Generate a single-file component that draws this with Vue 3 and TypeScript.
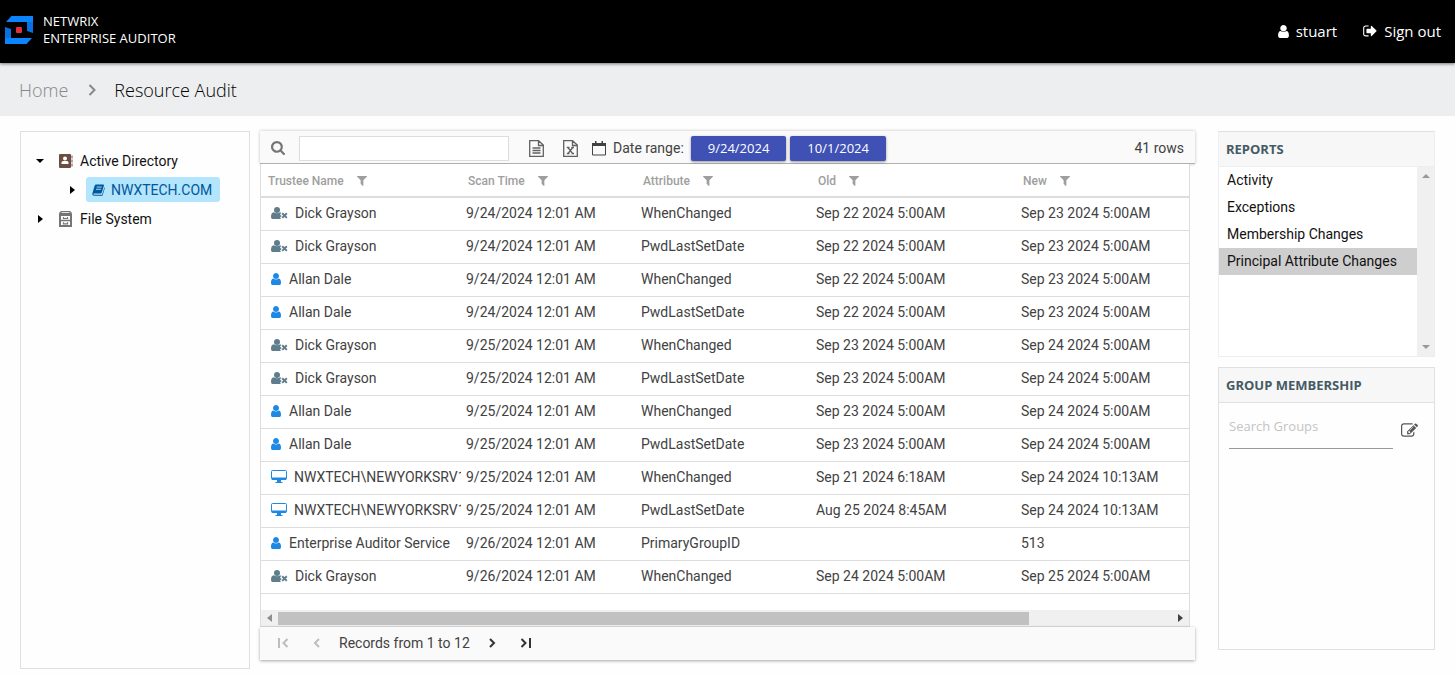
<script setup lang="ts">
import { ref } from 'vue'

type TrusteeKind = 'former' | 'user' | 'computer'

interface AuditRow {
  kind: TrusteeKind
  name: string
  scan: string
  attribute: string
  before: string
  after: string
}

const columns: string[] = ['Trustee Name', 'Scan Time', 'Attribute', 'Old', 'New']

function row(kind: TrusteeKind, name: string, day: string, attribute: string, before: string, after: string): AuditRow {
  return { kind, name, scan: `9/${day}/2024 12:01 AM`, attribute, before, after }
}

const rows: AuditRow[] = [
  row('former', 'Dick Grayson', '24', 'WhenChanged', 'Sep 22 2024 5:00AM', 'Sep 23 2024 5:00AM'),
  row('former', 'Dick Grayson', '24', 'PwdLastSetDate', 'Sep 22 2024 5:00AM', 'Sep 23 2024 5:00AM'),
  row('user', 'Allan Dale', '24', 'WhenChanged', 'Sep 22 2024 5:00AM', 'Sep 23 2024 5:00AM'),
  row('user', 'Allan Dale', '24', 'PwdLastSetDate', 'Sep 22 2024 5:00AM', 'Sep 23 2024 5:00AM'),
  row('former', 'Dick Grayson', '25', 'WhenChanged', 'Sep 23 2024 5:00AM', 'Sep 24 2024 5:00AM'),
  row('former', 'Dick Grayson', '25', 'PwdLastSetDate', 'Sep 23 2024 5:00AM', 'Sep 24 2024 5:00AM'),
  row('user', 'Allan Dale', '25', 'WhenChanged', 'Sep 23 2024 5:00AM', 'Sep 24 2024 5:00AM'),
  row('user', 'Allan Dale', '25', 'PwdLastSetDate', 'Sep 23 2024 5:00AM', 'Sep 24 2024 5:00AM'),
  row('computer', 'NWXTECH\\NEWYORKSRV1', '25', 'WhenChanged', 'Sep 21 2024 6:18AM', 'Sep 24 2024 10:13AM'),
  row('computer', 'NWXTECH\\NEWYORKSRV1', '25', 'PwdLastSetDate', 'Aug 25 2024 8:45AM', 'Sep 24 2024 10:13AM'),
  row('user', 'Enterprise Auditor Service', '26', 'PrimaryGroupID', '', '513'),
  row('former', 'Dick Grayson', '26', 'WhenChanged', 'Sep 24 2024 5:00AM', 'Sep 25 2024 5:00AM'),
]

const reports: string[] = ['Activity', 'Exceptions', 'Membership Changes', 'Principal Attribute Changes']
const activeReport = ref('Principal Attribute Changes')
const tableSearch = ref('')
const groupSearch = ref('')

const userPath =
  'M1536 1399q0 109-62.5 187t-150.5 78h-854q-88 0-150.5-78t-62.5-187q0-85 8.5-160.5t31.5-152 58.5-131 94-89 134.5-34.5q131 128 313 128t313-128q76 0 134.5 34.5t94 89 58.5 131 31.5 152 8.5 160.5zm-256-887q0 159-112.5 271.5t-271.5 112.5-271.5-112.5-112.5-271.5 112.5-271.5 271.5-112.5 271.5 112.5 112.5 271.5z'
</script>

<template>
  <div class="app">
    <header class="topbar">
      <div class="brand">
        <svg class="logo" viewBox="0 0 28 28" aria-hidden="true">
          <path fill="#0a84ff" d="M6.500 0H28V6H1z" />
          <path fill="#0a6fe0" d="M22 6h6v11l-6-2z" />
          <path fill="#0a84ff" d="M0 22h27l-5.500 6H0z" />
          <path fill="#0a6fe0" d="M0 11l6 2v9H0z" />
          <rect x="11" y="11" width="6" height="6" rx="1" fill="#e0303a" />
        </svg>
        <div class="brand-name">
          <span>NETWRIX</span>
          <span>ENTERPRISE AUDITOR</span>
        </div>
      </div>
      <nav class="account">
        <a href="#account">
          <svg class="icon-user" viewBox="256 128 1280 1536" aria-hidden="true"><path :d="userPath" /></svg>
          stuart
        </a>
        <a href="#signout">
          <svg class="icon-out" viewBox="96 200 1536 1400" aria-hidden="true">
            <path d="M704 1440q0 4 1 20t.5 26.500-3 23.500-10 19.500-20.500 6.500h-320q-119 0-203.500-84.500t-84.500-203.500v-704q0-119 84.500-203.500t203.500-84.500h320q13 0 22.500 9.500t9.500 22.500q0 4 1 20t.5 26.500-3 23.500-10 19.500-20.500 6.500h-320q-66 0-113 47t-47 113v704q0 66 47 113t113 47h312l11.500 1 11.500 3 8 5.500 7 9 2 13.500zm928-544q0 26-19 45l-544 544q-19 19-45 19t-45-19-19-45v-288h-448q-26 0-45-19t-19-45v-384q0-26 19-45t45-19h448v-288q0-26 19-45t45-19 45 19l544 544q19 19 19 45z" />
          </svg>
          Sign out
        </a>
      </nav>
    </header>

    <nav class="crumbs" aria-label="Breadcrumb">
      <a href="#home">Home</a>
      <svg viewBox="0 0 8 12" aria-hidden="true"><path d="M1.500 1L6.500 6L1.500 11" /></svg>
      <span>Resource Audit</span>
    </nav>

    <main class="content">
      <aside class="tree">
        <ul>
          <li class="node">
            <button class="twisty" aria-label="Collapse Active Directory"><svg viewBox="0 0 10 10"><path d="M1 3h8L5 7z" /></svg></button>
            <a href="#ad">
              <svg class="tree-icon" viewBox="0 0 16 16" aria-hidden="true">
                <rect x="1" y="1" width="12" height="14" rx="1" fill="#6d4c41" />
                <path fill="#6d4c41" d="M13.500 2.500h1v3h-1zM13.500 6.500h1v3h-1zM13.500 10.500h1v3h-1z" />
                <circle cx="7" cy="5.500" r="2" fill="#fff" />
                <path fill="#fff" d="M3.500 11V9.500Q3.500 8 5 8h4q1.500 0 1.500 1.500V11z" />
              </svg>
              Active Directory
            </a>
          </li>
          <li class="node child">
            <button class="twisty" aria-label="Expand NWXTECH.COM"><svg viewBox="0 0 10 10"><path d="M3 1v8l5-4z" /></svg></button>
            <a href="#nwxtech" class="selected">
              <svg class="book" viewBox="0 0 14 13" aria-hidden="true">
                <path fill="#01579b" d="M4.500 0.500H12q1.200 0 .9 1.200L10.500 9.500Q10.200 10.300 9.300 10.300H2.300Q1.500 10.300 1.500 11q.1.700 1 .7h7.800q.6 0 .8-.6L13.500 3.500q.5.500.3 1.200L11.600 11.800Q11.300 12.800 10.200 12.800H2.200Q.2 12.700.2 10.800L2.800 1.800Q3.200.5 4.500.5z" />
                <path stroke="#b3e5fc" d="M5 3.300h5.500M4.300 5.700h5.500" />
              </svg>
              NWXTECH.COM
            </a>
          </li>
          <li class="node">
            <button class="twisty" aria-label="Expand File System"><svg viewBox="0 0 10 10"><path d="M3 1v8l5-4z" /></svg></button>
            <a href="#fs">
              <svg class="tree-icon" viewBox="0 0 16 16" aria-hidden="true">
                <path fill="#757575" d="M3.500 0h8Q13 0 13.500 1.500L14 3H1L1.500 1.500Q2 0 3.500 0z" />
                <path fill="#fefefe" d="M3.500 1.200h8v.8h-8z" />
                <g fill="none" stroke="#757575">
                  <path stroke-width="2" d="M2 4v11h11V4z" />
                  <path stroke-width="1.500" d="M2 9.500h11" />
                  <path stroke-width="1.200" d="M5.500 6v1.500h4V6M5.500 11.300v1.500h4v-1.500" />
                </g>
              </svg>
              File System
            </a>
          </li>
        </ul>
      </aside>

      <section class="grid">
        <div class="toolbar">
          <svg class="icon-search" viewBox="64 128 1664 1664" aria-hidden="true">
            <path d="M1216 832q0-185-131.500-316.500t-316.500-131.500-316.500 131.500-131.500 316.500 131.500 316.500 316.500 131.500 316.500-131.500 131.500-316.500zm512 832q0 52-38 90t-90 38q-54 0-90-38l-343-342q-179 124-399 124-143 0-273.500-55.500t-225-150-150-225-55.500-273.500 55.500-273.500 150-225 225-150 273.500-55.500 273.500 55.500 225 150 150 225 55.500 273.500q0 220-124 399l343 343q37 37 37 90z" />
          </svg>
          <input v-model="tableSearch" class="table-search" type="text" aria-label="Search table" />
          <button class="tool" aria-label="Export as text">
            <svg viewBox="0 0 15 17">
              <path d="M1 .7h8.500L14.300 5v11.300H.7V.7zM9.500 .7V5.500h4.800M3.500 8h8M3.500 10.500h8M3.500 13h8" />
            </svg>
          </button>
          <button class="tool" aria-label="Export to Excel">
            <svg viewBox="0 0 15 17">
              <path d="M1 .7h8.500L14.300 5v11.300H.7V.7zM9.500 .7V5.500h4.800M5 7.500l4.500 6M9.800 7.500L5 13.500M3.800 7.500h2.700M8.300 7.500h2.700M3.800 13.500h2.700M8.300 13.500h2.700" />
            </svg>
          </button>
          <span class="range">
            <svg viewBox="0 0 14 15" aria-hidden="true">
              <path fill="none" stroke="#424242" d="M.5 3.500h13v10.500H.5z" />
              <path fill="#424242" d="M0 2h14v3H0zM3 0h1.500v3H3zM9.500 0H11v3H9.500z" />
            </svg>
            Date range:
          </span>
          <button class="date first">9/24/2024</button>
          <button class="date">10/1/2024</button>
          <span class="count">41 rows</span>
        </div>

        <div class="table-wrap">
          <table>
            <colgroup>
              <col class="c-name" /><col class="c-mid" /><col class="c-mid" /><col class="c-old" /><col />
            </colgroup>
            <thead>
              <tr>
                <th v-for="c in columns" :key="c" scope="col">
                  <span>{{ c }}</span>
                  <button :aria-label="`Filter ${c}`">
                    <svg viewBox="192 256 1408 1408">
                      <path d="M1595 295q17 41-14 70l-493 493v742q0 42-39 59-13 5-25 5-27 0-45-19l-256-256q-19-19-19-45v-486l-493-493q-31-29-14-70 17-39 59-39h1280q42 0 59 39z" />
                    </svg>
                  </button>
                </th>
              </tr>
            </thead>
            <tbody>
              <tr v-for="(r, i) in rows" :key="i">
                <td class="trustee">
                  <svg v-if="r.kind === 'user'" class="k-user" viewBox="256 128 1280 1536" aria-hidden="true"><path :d="userPath" /></svg>
                  <svg v-else-if="r.kind === 'former'" class="k-former" viewBox="0 0 17 12" aria-hidden="true">
                    <circle cx="6" cy="3" r="3" />
                    <path d="M2.800 5.200Q6 7.200 9.200 5.200L10.300 6L9 7.500L10.600 9.100L9 10.800L10 12H1.500Q0 12 0 10Q0 5.500 2.800 5.200z" />
                    <path class="cross" d="M11.200 6.300l4.600 4.600M15.800 6.300L11.200 10.900" />
                  </svg>
                  <svg v-else class="k-computer" viewBox="0 0 16 13" aria-hidden="true">
                    <rect x=".5" y=".5" width="15" height="9" rx="1" />
                    <path d="M1 7.500h14v2.500H1zM6 10h4v2h1.500v1h-7v-1H6z" />
                  </svg>
                  <span>{{ r.name }}</span>
                </td>
                <td>{{ r.scan }}</td>
                <td>{{ r.attribute }}</td>
                <td>{{ r.before }}</td>
                <td>{{ r.after }}</td>
              </tr>
            </tbody>
          </table>
          <div class="hscroll" aria-hidden="true">
            <svg viewBox="0 0 5 8"><path fill="#8f8f8f" d="M5 0v8L0 4z" /></svg>
            <div class="track"><div class="thumb"></div></div>
            <svg viewBox="0 0 5 8"><path fill="#404040" d="M0 0v8l5-4z" /></svg>
          </div>
        </div>

        <div class="pager">
          <button aria-label="First page" disabled><svg viewBox="0 0 12 10"><path d="M2 0v10M10.500 1L6.500 5L10.500 9" /></svg></button>
          <button aria-label="Previous page" disabled><svg viewBox="0 0 12 10"><path d="M8 1L4 5L8 9" /></svg></button>
          <span>Records from 1 to 12</span>
          <button aria-label="Next page"><svg viewBox="0 0 12 10"><path d="M4 1L8 5L4 9" /></svg></button>
          <button aria-label="Last page"><svg viewBox="0 0 12 10"><path d="M1.500 1L5.500 5L1.500 9M10 0v10" /></svg></button>
        </div>
      </section>

      <aside class="side">
        <section class="reports">
          <h2>REPORTS</h2>
          <div class="list">
            <ul>
              <li v-for="r in reports" :key="r">
                <button :class="{ active: r === activeReport }" @click="activeReport = r">{{ r }}</button>
              </li>
            </ul>
            <div class="vscroll" aria-hidden="true">
              <svg viewBox="0 0 8 4"><path d="M0 4h8L4 0z" /></svg>
              <svg viewBox="0 0 8 4"><path d="M0 0h8L4 4z" /></svg>
            </div>
          </div>
        </section>
        <section class="groups">
          <h2>GROUP MEMBERSHIP</h2>
          <div class="group-search">
            <input v-model="groupSearch" type="text" placeholder="Search Groups" aria-label="Search Groups" />
            <button aria-label="Edit groups">
              <svg viewBox="0 128 1792 1408">
                <path d="M888 1184l116-116-152-152-116 116v56h96v96h56zm440-720q-16-16-33 1l-350 350q-17 17-1 33t33-1l350-350q17-17 1-33zm80 594v190q0 119-84.500 203.500t-203.500 84.500h-832q-119 0-203.500-84.500t-84.500-203.500v-832q0-119 84.500-203.500t203.500-84.500h832q63 0 117 25 15 7 18 23 3 17-9 29l-49 49q-14 14-32 8-23-6-45-6h-832q-66 0-113 47t-47 113v832q0 66 47 113t113 47h832q66 0 113-47t47-113v-126q0-13 9-22l64-64q15-15 35-7t20 29zm-96-738l288 288-672 672h-288v-288zm444 132l-92 92-288-288 92-92q28-28 68-28t68 28l152 152q28 28 28 68t-28 68z" />
              </svg>
            </button>
          </div>
        </section>
      </aside>
    </main>
  </div>
</template>

<style>
html,
body {
  margin: 0;
  background: #fefefe;
}
</style>

<style scoped>
* {
  box-sizing: border-box;
}
.app {
  font-family: Roboto, "Liberation Sans", sans-serif;
  font-size: 14px;
  color: #111;
}
button {
  font: inherit;
  color: inherit;
  background: none;
  border: 0;
  padding: 0;
  cursor: pointer;
}
a {
  color: inherit;
  text-decoration: none;
}
ul {
  list-style: none;
  margin: 0;
  padding: 0;
}
svg {
  display: block;
  flex: none;
}
.topbar {
  position: relative;
  display: flex;
  justify-content: space-between;
  align-items: center;
  height: 63px;
  padding: 0 14px 3px 5px;
  background: #000;
  color: #fff;
  box-shadow: 0 1px 3px rgba(0, 0, 0, 0.5);
  font-family: "Open Sans", sans-serif;
}
.brand {
  display: flex;
  align-items: center;
  gap: 10px;
}
.logo {
  width: 28px;
  height: 28px;
}
.brand-name {
  display: flex;
  flex-direction: column;
  font-size: 13px;
  line-height: 17px;
}
.account {
  display: flex;
  gap: 26px;
  padding-top: 2px;
  font-size: 15px;
}
.account a {
  display: flex;
  align-items: center;
  gap: 7px;
}
.account svg {
  fill: #fff;
}
.icon-user {
  width: 11px;
  height: 13px;
}
.icon-out {
  width: 14px;
  height: 12px;
}
.crumbs {
  display: flex;
  align-items: center;
  height: 53px;
  padding: 1px 19px 0;
  background: #eceeef;
  font-family: "Open Sans", sans-serif;
  font-size: 18px;
  font-weight: 300;
  color: #000;
}
.crumbs a {
  color: #888;
}
.crumbs svg {
  width: 8px;
  height: 12px;
  margin: 0 18px 0 20px;
  fill: none;
  stroke: #888;
  stroke-width: 2;
}
.content {
  display: grid;
  grid-template-columns: 230px minmax(0, 1fr) 217px;
  align-items: start;
  padding: 15px 20px 5px;
}
.tree {
  min-height: 538px;
  padding-top: 14px;
  border: 1px solid #e0e0e0;
}
.node {
  display: flex;
  align-items: center;
  height: 29px;
  padding-left: 14px;
}
.node.child {
  padding-left: 46px;
}
.twisty svg {
  width: 10px;
  height: 10px;
}
.node a {
  display: flex;
  align-items: center;
  gap: 6px;
  margin-left: 13px;
}
.tree-icon {
  width: 16px;
  height: 16px;
}
.node.child a {
  height: 25px;
  margin-left: 9px;
  padding: 0 8px 0 6px;
  background: #b3e5fc;
  color: #01579b;
  border-radius: 3px;
}
.book {
  width: 13px;
  height: 12px;
  fill: none;
}
.grid {
  margin: 0 23px 0 10px;
}
.toolbar,
.pager {
  display: flex;
  align-items: center;
  background: #fafafa;
  color: #424242;
}
.toolbar {
  height: 33px;
  padding: 2px 11px 0;
  border-bottom: 1px solid #b0b0b0;
  box-shadow: 0 0 3px rgba(0, 0, 0, 0.25);
}
.icon-search {
  width: 14px;
  height: 14px;
  fill: #757575;
}
.table-search {
  width: 210px;
  height: 25px;
  margin: 0 20px 0 14px;
  padding: 0 6px;
  border: 1px solid #ddd;
  background: #fff;
  font: inherit;
}
.tool {
  margin-right: 19px;
}
.tool svg {
  width: 15px;
  height: 17px;
  fill: none;
  stroke: #616161;
  stroke-width: 1.3;
}
.range {
  display: flex;
  align-items: center;
  gap: 7px;
  margin-left: -5px;
}
.range svg {
  width: 14px;
  height: 15px;
}
.date {
  height: 25px;
  padding: 0 17px;
  margin-left: 4px;
  border-radius: 2px;
  background: #3f51b5;
  color: #fff;
  font-family: "Open Sans", sans-serif;
  font-size: 13px;
  box-shadow: 0 1px 3px rgba(0, 0, 0, 0.4);
}
.date.first {
  margin-left: 7px;
}
.count {
  margin-left: auto;
}
.table-wrap {
  margin-right: 5px;
  border: 1px solid #ddd;
  border-top: 0;
  background: #fff;
}
table {
  width: 100%;
  table-layout: fixed;
  border-collapse: separate;
  border-spacing: 0;
}
.c-name {
  width: 200px;
}
.c-mid {
  width: 175px;
}
.c-old {
  width: 205px;
}
th {
  height: 34px;
  padding: 1px 7px 0;
  border-bottom: 2px solid #ddd;
  text-align: left;
  font-size: 12px;
  font-weight: 500;
  color: #9e9e9e;
}
th button {
  margin-left: 13px;
  vertical-align: middle;
}
th span {
  vertical-align: middle;
}
th svg {
  width: 10px;
  height: 10px;
  fill: #9e9e9e;
}
td {
  height: 33px;
  padding: 0 5px 2px;
  border-bottom: 1px solid #ddd;
  color: #424242;
  white-space: nowrap;
  overflow: hidden;
}
.trustee {
  padding: 0 0 2px 10px;
}
.trustee svg {
  display: inline-block;
  vertical-align: -1px;
}
.k-user {
  width: 10px;
  height: 12px;
  margin-right: 8px;
  fill: #1e88e5;
}
.k-former {
  width: 17px;
  height: 12px;
  margin-right: 7px;
  fill: #607d8b;
}
.cross {
  stroke: #607d8b;
  stroke-width: 2;
}
.k-computer {
  width: 16px;
  height: 13px;
  margin-right: 7px;
  fill: #1e88e5;
}
.k-computer rect {
  fill: #fff;
  stroke: #1e88e5;
}
.hscroll {
  display: flex;
  align-items: center;
  height: 16px;
  margin-top: 16px;
  padding: 0 6px;
  background: #f0f0f0;
}
.hscroll svg {
  width: 5px;
  height: 8px;
}
.track {
  flex: 1;
  margin: 0 6px;
}
.thumb {
  width: 84%;
  height: 13px;
  background: #c1c1c1;
}
.pager {
  height: 33px;
  padding: 0 17px 1px;
  box-shadow: 0 1px 3px rgba(0, 0, 0, 0.35);
}
.pager svg {
  width: 12px;
  height: 10px;
  fill: none;
  stroke: #333;
  stroke-width: 2;
}
.pager button:disabled svg {
  stroke: #bdbdbd;
}
.pager button + button {
  margin-left: 22px;
}
.pager span {
  margin: 0 16px;
}
h2 {
  margin: 0;
  height: 35px;
  padding-left: 7px;
  line-height: 34px;
  background: #f7f7f7;
  border-bottom: 1px solid #e0e0e0;
  font-family: "Open Sans", sans-serif;
  font-size: 13px;
  font-weight: 700;
  color: #455a64;
}
.reports {
  border: 1px solid #e0e0e0;
  border-color: #e0e0e0 #eee #eee;
}
.reports h2 {
  border-color: #eee;
}
.list {
  display: flex;
  height: 189px;
}
.list ul {
  flex: 1;
  background: #fff;
}
.list button {
  display: block;
  width: 100%;
  height: 27px;
  padding: 0 0 2px 8px;
  text-align: left;
}
.list button.active {
  background: #cecece;
}
.vscroll {
  display: flex;
  flex-direction: column;
  justify-content: space-between;
  align-items: center;
  width: 17px;
  padding: 7px 0;
  background: #f0f0f0;
}
.vscroll svg {
  width: 8px;
  height: 4px;
  fill: #999;
}
.groups {
  min-height: 283px;
  margin-top: 10px;
  border: 1px solid #e0e0e0;
}
.group-search {
  display: flex;
  align-items: center;
  gap: 8px;
  padding: 0 16px 0 10px;
}
.group-search input {
  flex: 1;
  min-width: 0;
  height: 46px;
  padding: 0;
  border: 0;
  border-bottom: 1px solid #999;
  background: none;
  font-family: "Open Sans", sans-serif;
  font-size: 13px;
}
.group-search input::placeholder {
  color: #c4c4c4;
}
.group-search button {
  padding-top: 8px;
}
.group-search svg {
  width: 17px;
  height: 14px;
  fill: #555;
}
</style>
